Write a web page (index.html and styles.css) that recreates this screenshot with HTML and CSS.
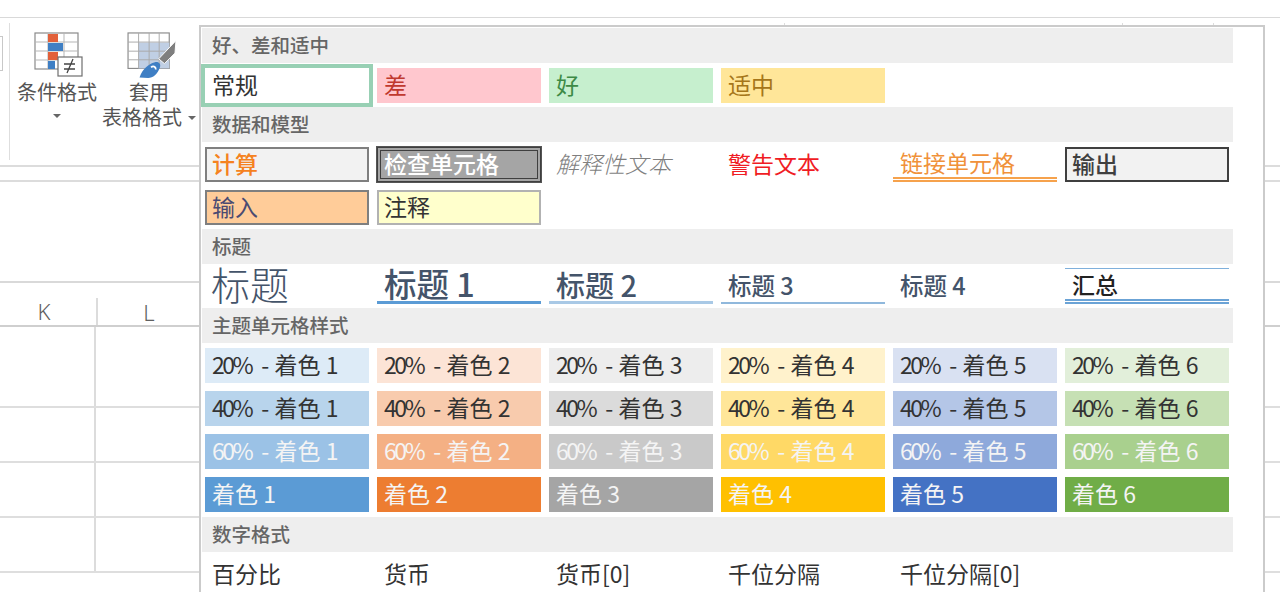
FILE: index.html
```html
<!DOCTYPE html>
<html lang="zh-CN">
<head>
<meta charset="utf-8">
<title>单元格样式</title>
<link rel="stylesheet" href="styles.css">
</head>
<body>
<div class="sheet">
  <div class="topbar"></div>
  <div class="ribbon">
    <div class="edge"></div>
    <div class="sep"></div>
    <div class="rbtn cond">
      <svg class="ico" width="50" height="46" viewBox="0 0 50 46">
        <rect x="1" y="1" width="43" height="36" fill="#fff" stroke="#8a8a8a" stroke-width="1.2"/>
        <path d="M1 10h43M1 19h43M1 28h43M14 1v36M30 1v36" stroke="#b5b5b5" fill="none"/>
        <rect x="14" y="2" width="10" height="8" fill="#e2603a"/>
        <rect x="14" y="11" width="15" height="8" fill="#3f7fc4"/>
        <rect x="14" y="20" width="10" height="8" fill="#e2603a"/>
        <rect x="14" y="29" width="7" height="8" fill="#3f7fc4"/>
        <rect x="24" y="25" width="24" height="19" fill="#fff" stroke="#6e6e6e" stroke-width="1.2"/>
        <path d="M30 32h11M30 37h11M39 27l-6 14" stroke="#444" stroke-width="1.3" fill="none"/>
      </svg>
      <div class="rlabel">条件格式</div>
      <div class="caret"></div>
    </div>
    <div class="rbtn tbl">
      <svg class="ico" width="52" height="48" viewBox="0 0 52 48">
        <rect x="1" y="1" width="43" height="37" fill="#fff" stroke="#8a8a8a" stroke-width="1.2"/>
        <rect x="12" y="11" width="32" height="27" fill="#c0cfe4"/>
        <path d="M1 10.500h43M1 20h43M1 29h43M12 1v37M23 1v37M33.500 1v37" stroke="#a9a9a9" fill="none"/>
        <path d="M51 9l-1 13-11 11-6-5z" fill="#7f7f7f" stroke="#fff" stroke-width="1"/>
        <path d="M13 47.500c3-9 9-14 16-16 4-1 7 2 5 6-2 6-7 10.500-12 10.500z" fill="#3f7fc4"/>
        <path d="M25 37c2-2 5-1 5 2" stroke="#fff" stroke-width="1.800" fill="none"/>
      </svg>
      <div class="rlabel">套用</div>
      <div class="rlabel">表格格式<span class="caret inl"></span></div>
    </div>
    <div class="tick t1"></div>
    <div class="tick t2"></div>
    <div class="tick t3"></div>
  </div>
  <div class="gap"></div>
  <div class="blank"></div>
  <div class="colhead">
    <div class="colname k">K</div>
    <div class="colname l">L</div>
    <div class="colrest"></div>
  </div>
  <div class="gridrow r1"><div class="c k"></div><div class="c l"></div></div>
  <div class="gridrow"><div class="c k"></div><div class="c l"></div></div>
  <div class="gridrow"><div class="c k"></div><div class="c l"></div></div>
  <div class="gridrow"><div class="c k"></div><div class="c l"></div></div>
</div>

<div class="popup">
  <div class="bar">好、差和适中</div>
  <div class="cells">
    <div class="cell normal">常规</div>
    <div class="cell bad">差</div>
    <div class="cell good">好</div>
    <div class="cell neutral">适中</div>
  </div>
  <div class="bar">数据和模型</div>
  <div class="cells">
    <div class="cell calc">计算</div>
    <div class="cell check">检查单元格</div>
    <div class="cell expl">解释性文本</div>
    <div class="cell warn">警告文本</div>
    <div class="cell linked">链接单元格</div>
    <div class="cell output">输出</div>
    <div class="cell input">输入</div>
    <div class="cell note">注释</div>
  </div>
  <div class="bar">标题</div>
  <div class="cells">
    <div class="cell title">标题</div>
    <div class="cell h1">标题 1</div>
    <div class="cell h2">标题 2</div>
    <div class="cell h3">标题 3</div>
    <div class="cell h4">标题 4</div>
    <div class="cell total">汇总</div>
  </div>
  <div class="bar">主题单元格样式</div>
  <div class="cells theme">
    <div class="cell a1-20"><span class="pct">20%</span> - 着色 1</div>
    <div class="cell a2-20"><span class="pct">20%</span> - 着色 2</div>
    <div class="cell a3-20"><span class="pct">20%</span> - 着色 3</div>
    <div class="cell a4-20"><span class="pct">20%</span> - 着色 4</div>
    <div class="cell a5-20"><span class="pct">20%</span> - 着色 5</div>
    <div class="cell a6-20"><span class="pct">20%</span> - 着色 6</div>
    <div class="cell a1-40"><span class="pct">40%</span> - 着色 1</div>
    <div class="cell a2-40"><span class="pct">40%</span> - 着色 2</div>
    <div class="cell a3-40"><span class="pct">40%</span> - 着色 3</div>
    <div class="cell a4-40"><span class="pct">40%</span> - 着色 4</div>
    <div class="cell a5-40"><span class="pct">40%</span> - 着色 5</div>
    <div class="cell a6-40"><span class="pct">40%</span> - 着色 6</div>
    <div class="cell a1-60"><span class="pct">60%</span> - 着色 1</div>
    <div class="cell a2-60"><span class="pct">60%</span> - 着色 2</div>
    <div class="cell a3-60"><span class="pct">60%</span> - 着色 3</div>
    <div class="cell a4-60"><span class="pct">60%</span> - 着色 4</div>
    <div class="cell a5-60"><span class="pct">60%</span> - 着色 5</div>
    <div class="cell a6-60"><span class="pct">60%</span> - 着色 6</div>
    <div class="cell a1">着色 1</div>
    <div class="cell a2">着色 2</div>
    <div class="cell a3">着色 3</div>
    <div class="cell a4">着色 4</div>
    <div class="cell a5">着色 5</div>
    <div class="cell a6">着色 6</div>
  </div>
  <div class="bar">数字格式</div>
  <div class="cells">
    <div class="cell">百分比</div>
    <div class="cell">货币</div>
    <div class="cell">货币[0]</div>
    <div class="cell">千位分隔</div>
    <div class="cell">千位分隔[0]</div>
  </div>
</div>
</body>
</html>
```
FILE: styles.css
```css
* { box-sizing: border-box; }
html, body { margin: 0; height: 100%; overflow: hidden; background: #fff; }
body {
  position: relative;
  width: 1280px;
  height: 592px;
  font-family: "Noto Sans CJK SC", sans-serif;
  color: #3c3c3c;
}
.sheet { width: 1280px; }
.topbar { height: 18px; border-bottom: 1px solid #d9d9d9; }
.ribbon {
  height: 149px;
  border-bottom: 2px solid #dcdcdc;
  display: flex;
  position: relative;
}
.edge { width: 3px; height: 35px; margin-top: 18px; border: 1px solid #c8c8c8; border-left: 0; }
.sep { width: 1px; height: 137px; margin: 5px 0 0 6px; background: #dedede; }
.rbtn { display: flex; flex-direction: column; align-items: center; color: #555; }
.rlabel { font-size: 20px; line-height: 25px; white-space: nowrap; }
.cond { width: 92px; margin-left: 1px; }
.tbl { width: 92px; margin-left: 0; }
.ico { display: block; margin-top: 14px; height: 46px; }
.cond .ico { margin-left: 3px; }
.tbl .ico { margin-left: 6px; }
.rbtn .ico + .rlabel { margin-top: 1px; }
.caret {
  width: 0; height: 0;
  margin-top: 10px;
  border: 4px solid transparent;
  border-top: 4px solid #666;
  border-bottom: 0;
}
.caret.inl { display: inline-block; margin: 0 0 3px 6px; vertical-align: middle; }
.tick { position: absolute; top: 5px; width: 1px; height: 4px; background: #dcdcdc; }
.t1 { left: 784px; }
.t2 { left: 1122px; }
.t3 { left: 1213px; }
.gap { height: 15px; border-bottom: 2px solid #dcdcdc; }
.blank { height: 101px; border-bottom: 2px solid #d9d9d9; }
.colhead { height: 44px; display: flex; border-bottom: 2px solid #cfcfcf; }
.colname { font-size: 22px; font-family: "Noto Sans", sans-serif; color: #606060; text-align: center; line-height: 28px; font-weight: 300; }
.colname.k { width: 96px; padding-top: 14px; padding-right: 8px; }
.colname.l { width: 104px; border-left: 2px solid #dcdcdc; margin-top: 15px; }
.gridrow { height: 55px; display: flex; border-bottom: 2px solid #dedede; }
.gridrow.r1 { height: 81px; }
.c.k { width: 96px; border-right: 2px solid #dcdcdc; }
.popup {
  position: absolute;
  left: 199px;
  top: 25px;
  width: 1066px;
  height: 580px;
  background: #fff;
  border: 2px solid #cbcbcb;
  border-bottom: 0;
  padding: 1px 0 0 1px;
}
.bar {
  width: 1031px;
  height: 35px;
  background: #eeeeee;
  color: #666;
  font-size: 19.500px;
  font-weight: 500;
  line-height: 34px;
  padding-left: 10px;
}
.cells {
  display: grid;
  grid-template-columns: repeat(6, 164px);
  grid-auto-rows: 35px;
  gap: 8px;
  padding: 5px 0 4px 3px;
}
.cells.theme { padding-bottom: 5px; }
.cell {
  font-size: 23px;
  line-height: 33px;
  padding-left: 7px;
  white-space: nowrap;
  color: #333;
  position: relative;
}
.pct { letter-spacing: -2.500px; margin-right: 5px; }
.normal { outline: 4px solid #98d0b4; background: #fff; }
.bad { background: #ffc7ce; color: #c0392f; }
.good { background: #c6efce; color: #3d8a46; }
.neutral { background: #ffe699; color: #a6761a; }
.calc { background: #f2f2f2; border: 2px solid #7f7f7f; color: #f58220; font-weight: 500; line-height: 29px; padding-left: 5px; }
.check { background: #a5a5a5; border: 4px double #3f3f3f; outline: 1px solid #555; color: #fff; font-weight: 500; line-height: 25px; padding-left: 3px; }
.expl { color: #7f7f7f; font-style: italic; font-weight: 300; }
.warn { color: #f01c24; }
.linked { color: #f0913a; border-bottom: 5px double #f6a24c; line-height: 30px; }
.output { background: #f2f2f2; border: 2px solid #3f3f3f; color: #3f3f3f; font-weight: 500; line-height: 29px; padding-left: 5px; }
.input { background: #ffcc99; border: 2px solid #7f7f7f; color: #4a4a72; line-height: 29px; padding-left: 5px; }
.note { background: #ffffcc; border: 2px solid #b2b2b2; line-height: 29px; padding-left: 5px; }
.title { font-size: 39px; font-weight: 200; color: #44546a; line-height: 28px; padding-left: 6px; }
.h1 { font-size: 32.500px; font-weight: 500; color: #44546a; border-bottom: 3px solid #5b9bd5; line-height: 28px; }
.h2 { font-size: 29px; font-weight: 500; color: #44546a; border-bottom: 3px solid #a9c9e6; line-height: 30px; }
.h3 { font-size: 23.500px; font-weight: 500; color: #44546a; border-bottom: 2px solid #90b8dc; line-height: 33px; }
.h4 { font-size: 23.500px; font-weight: 500; color: #44546a; line-height: 33px; }
.total { font-weight: 500; color: #222; box-shadow: 0 -1px 0 #7fb0dc; border-bottom: 5px double #6ba3d6; line-height: 30px; font-size: 23px; }
.a1-20 { background: #ddebf7; } .a2-20 { background: #fce4d6; } .a3-20 { background: #ededed; }
.a4-20 { background: #fff2cc; } .a5-20 { background: #d9e1f2; } .a6-20 { background: #e2efda; }
.a1-40 { background: #b8d4ec; } .a2-40 { background: #f8cbad; } .a3-40 { background: #dbdbdb; }
.a4-40 { background: #ffe699; } .a5-40 { background: #b4c6e7; } .a6-40 { background: #c6e0b4; }
.a1-60, .a2-60, .a3-60, .a4-60, .a5-60, .a6-60, .a1, .a2, .a3, .a4, .a5, .a6 { color: #f4f4f4; }
.a1-60 { background: #9bc2e6; } .a2-60 { background: #f4b084; } .a3-60 { background: #c9c9c9; }
.a4-60 { background: #ffd966; } .a5-60 { background: #8ea9db; } .a6-60 { background: #a9d08e; }
.a1 { background: #5b9bd5; } .a2 { background: #ed7d31; } .a3 { background: #a5a5a5; }
.a4 { background: #ffc000; } .a5 { background: #4472c4; } .a6 { background: #70ad47; }
```
